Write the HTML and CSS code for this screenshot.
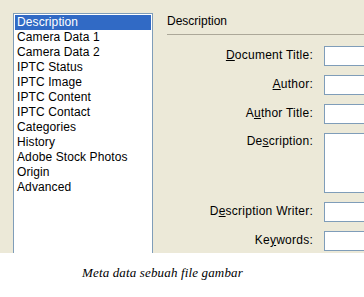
FILE: index.html
```html
<!DOCTYPE html>
<html lang="id">
<head>
    <meta charset="UTF-8">
    <title>Meta data sebuah file gambar</title>
    <link rel="stylesheet" href="styles.css">
</head>
<body>

    <div class="window">
        <!-- daftar kategori -->
        <ul class="category-list">
            <li class="selected">Description</li>
            <li>Camera Data 1</li>
            <li>Camera Data 2</li>
            <li>IPTC Status</li>
            <li>IPTC Image</li>
            <li>IPTC Content</li>
            <li>IPTC Contact</li>
            <li>Categories</li>
            <li>History</li>
            <li>Adobe Stock Photos</li>
            <li>Origin</li>
            <li>Advanced</li>
        </ul>

        <!-- panel isian -->
        <div class="form-panel">
            <div class="panel-title">Description</div>
            <div class="separator"></div>

            <div class="field-row">
                <label><u>D</u>ocument Title:</label>
                <div class="text-box"></div>
            </div>
            <div class="field-row">
                <label><u>A</u>uthor:</label>
                <div class="text-box"></div>
            </div>
            <div class="field-row">
                <label>A<u>u</u>thor Title:</label>
                <div class="text-box"></div>
            </div>
            <div class="field-row">
                <label class="top-label">De<u>s</u>cription:</label>
                <div class="text-box text-area"></div>
            </div>
            <div class="field-row">
                <label>D<u>e</u>scription Writer:</label>
                <div class="text-box"></div>
            </div>
            <div class="field-row">
                <label>Ke<u>y</u>words:</label>
                <div class="text-box"></div>
            </div>
        </div>
    </div>

    <p class="caption">Meta data sebuah file gambar</p>

</body>
</html>
```

FILE: styles.css
```css
body {
    margin: 0;
    background-color: #ffffff;
    font-family: "Liberation Sans", Arial, sans-serif;
    font-size: 12px;
    color: #000000;
    overflow: hidden;
}

.window {
    display: flex;
    height: 253px;
    padding: 13px 0 0 13px;
    box-sizing: border-box;
    background-color: #ece9d8;
    overflow: hidden;
}

.category-list {
    flex: none;
    width: 140px;
    height: 260px;
    margin: 0;
    padding: 1px 0 0 1px;
    box-sizing: border-box;
    list-style: none;
    background-color: #ffffff;
    border: 1px solid #7f9db9;
}

.category-list li {
    height: 15px;
    line-height: 15px;
    padding-left: 2px;
    margin-right: 1px;
    letter-spacing: 0.1px;
    white-space: nowrap;
}

.category-list li.selected {
    background-color: #316ac5;
    color: #ffffff;
}

.form-panel {
    flex: 1;
    margin-top: 1px;
    min-width: 0;
}

.panel-title {
    line-height: 15px;
    padding-left: 14px;
}

.separator {
    height: 1px;
    margin: 5px 0 11px 14px;
    background-color: #aca899;
}

.field-row {
    display: flex;
    gap: 11px;
    margin-bottom: 9px;
}

.field-row label {
    flex: none;
    width: 160px;
    line-height: 19px;
    text-align: right;
    letter-spacing: 0.25px;
    white-space: nowrap;
}

.field-row label.top-label {
    line-height: 16px;
}

.text-box {
    flex: none;
    width: 120px;
    height: 20px;
    box-sizing: border-box;
    background-color: #ffffff;
    border: 1px solid #7f9db9;
}

.text-area {
    height: 60px;
}

.caption {
    margin: 0;
    padding: 12px 0 0 82px;
    font-family: "Liberation Serif", "Times New Roman", serif;
    font-style: italic;
    font-size: 13px;
    line-height: 16px;
    letter-spacing: 0.15px;
}
```
